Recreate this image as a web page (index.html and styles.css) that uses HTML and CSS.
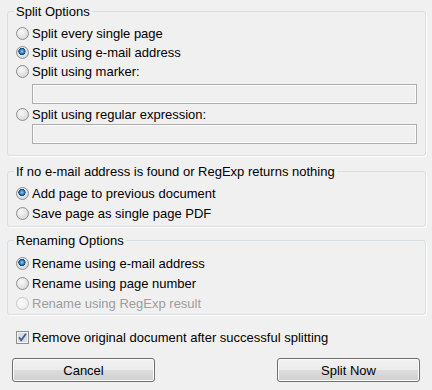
FILE: index.html
```html
<!DOCTYPE html>
<html lang="en">
<head>
  <meta charset="UTF-8">
  <title>Split Options</title>
  <link rel="stylesheet" href="styles.css">
</head>
<body>
  <div class="dialog">
    <fieldset class="group group-split">
      <legend>Split Options</legend>
      <label class="opt"><input type="radio" name="split">Split every single page</label>
      <label class="opt"><input type="radio" name="split" checked>Split using e-mail address</label>
      <label class="opt"><input type="radio" name="split">Split using marker:</label>
      <input type="text" class="field field-first" disabled>
      <label class="opt opt-tight"><input type="radio" name="split">Split using regular expression:</label>
      <input type="text" class="field" disabled>
    </fieldset>

    <fieldset class="group group-fallback">
      <legend>If no e-mail address is found or RegExp returns nothing</legend>
      <label class="opt"><input type="radio" name="fallback" checked>Add page to previous document</label>
      <label class="opt"><input type="radio" name="fallback">Save page as single page PDF</label>
    </fieldset>

    <fieldset class="group group-rename">
      <legend>Renaming Options</legend>
      <label class="opt"><input type="radio" name="rename" checked>Rename using e-mail address</label>
      <label class="opt"><input type="radio" name="rename">Rename using page number</label>
      <label class="opt disabled"><input type="radio" name="rename" disabled>Rename using RegExp result</label>
    </fieldset>

    <label class="check-row">
      <span class="check">
        <svg width="13" height="13" viewBox="0 0 13 13">
          <rect x="0.5" y="0.5" width="12" height="12" fill="#f4f4f4" stroke="#8e8f8f"/>
          <rect x="2" y="2" width="9" height="9" fill="#dcdcdc"/>
          <path d="M3 6.2 L5.2 9.2 L10 2.8" fill="none" stroke="#3b5aa6" stroke-width="1.8"/>
        </svg>
      </span>
      Remove original document after successful splitting
    </label>

    <div class="buttons">
      <button class="btn">Cancel</button>
      <button class="btn">Split Now</button>
    </div>
  </div>
</body>
</html>
```

FILE: styles.css
```css
body {
  margin: 0;
  background-color: #f0f0f0;
  font-family: "Liberation Sans", Arial, sans-serif;
  font-size: 13px;
  color: #000;
}

.dialog {
  width: 432px;
  height: 390px;
  padding: 4px 6px 0 7px;
  box-sizing: border-box;
}

.group {
  margin: 0;
  padding: 0 8px;
  min-width: 0;
  border: 1px solid #d5dfe5;
  border-radius: 3px;
  box-shadow: 1px 1px 0 #fff;
}

.group legend {
  margin-left: -2px;
  padding: 0 2px;
  line-height: 15px;
}

.group-split {
  padding-top: 5px;
  padding-bottom: 11px;
}

.group-fallback {
  margin-top: 8px;
  padding-top: 4px;
  padding-bottom: 3px;
}

.group-rename {
  margin-top: 6px;
  padding-top: 5px;
  padding-bottom: 1px;
}

.opt {
  display: flex;
  align-items: center;
  height: 19px;
  line-height: 19px;
  white-space: nowrap;
}

.opt-tight {
  margin-top: 1px;
}

.group-fallback .opt,
.group-rename .opt {
  height: 20px;
}

.opt.disabled {
  color: #9d9d9d;
}

.opt input {
  appearance: none;
  -webkit-appearance: none;
  width: 13px;
  height: 13px;
  margin: 0 3px 0 0;
  border: 1px solid #8f8f8f;
  border-radius: 50%;
  background: radial-gradient(circle at 40% 35%, #fafafa 0, #e6e6e6 45%, #cdcdcd 100%);
  box-sizing: border-box;
}

.opt input:checked {
  background:
    radial-gradient(circle at 45% 40%, #9adbfb 0, #3f97dc 1.5px, #17589a 3px, #0d3c6a 3.4px, transparent 3.8px),
    radial-gradient(circle at 40% 35%, #fafafa 0, #e6e6e6 45%, #cdcdcd 100%);
}

.opt input:disabled {
  border-color: #c6c6c6;
  background: radial-gradient(circle at 40% 35%, #fbfbfb 0, #f1f1f1 60%, #e6e6e6 100%);
}

.field {
  display: block;
  height: 20px;
  margin: 0 0 0 16px;
  width: calc(100% - 16px);
  border: 1px solid #adadad;
  background-color: #f0f0f0;
  box-shadow: inset 0 0 0 1px #fbfbfb;
  box-sizing: border-box;
}

.field-first {
  margin-top: 3px;
}

.check-row {
  display: flex;
  align-items: center;
  height: 19px;
  line-height: 19px;
  margin-top: 13px;
  padding-left: 9px;
}

.check {
  display: flex;
  width: 13px;
  height: 13px;
  margin-right: 3px;
}

.buttons {
  display: flex;
  justify-content: space-between;
  margin-top: 11px;
  padding: 0 6px 0 5px;
}

.btn {
  width: 143px;
  height: 24px;
  padding: 0;
  border: 1px solid #707070;
  border-radius: 3px;
  background: linear-gradient(#f2f2f2 0, #ebebeb 50%, #dddddd 50%, #cfcfcf 100%);
  box-shadow: inset 0 0 0 1px #fcfcfc;
  font-family: "Liberation Sans", Arial, sans-serif;
  font-size: 13px;
  color: #000;
}
```
